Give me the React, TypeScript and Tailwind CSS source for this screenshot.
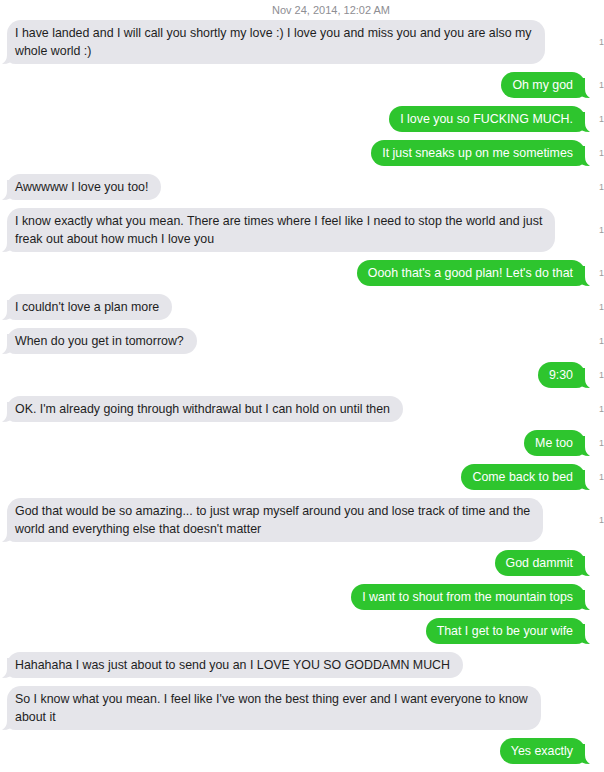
import React from "react";

type Msg = { side: "L" | "R"; lines: string[]; ts?: boolean };

const msgs: Msg[] = [
  { side: "L", lines: ["I have landed and I will call you shortly my love :) I love you and miss you and you are also my", "whole world :)"], ts: true },
  { side: "R", lines: ["Oh my god"], ts: true },
  { side: "R", lines: ["I love you so FUCKING MUCH."], ts: true },
  { side: "R", lines: ["It just sneaks up on me sometimes"], ts: true },
  { side: "L", lines: ["Awwwww I love you too!"], ts: true },
  { side: "L", lines: ["I know exactly what you mean. There are times where I feel like I need to stop the world and just", "freak out about how much I love you"], ts: true },
  { side: "R", lines: ["Oooh that's a good plan! Let's do that"], ts: true },
  { side: "L", lines: ["I couldn't love a plan more"], ts: true },
  { side: "L", lines: ["When do you get in tomorrow?"], ts: true },
  { side: "R", lines: ["9:30"], ts: true },
  { side: "L", lines: ["OK. I'm already going through withdrawal but I can hold on until then"], ts: true },
  { side: "R", lines: ["Me too"], ts: true },
  { side: "R", lines: ["Come back to bed"], ts: true },
  { side: "L", lines: ["God that would be so amazing... to just wrap myself around you and lose track of time and the", "world and everything else that doesn't matter"], ts: true },
  { side: "R", lines: ["God dammit"] },
  { side: "R", lines: ["I want to shout from the mountain tops"] },
  { side: "R", lines: ["That I get to be your wife"] },
  { side: "L", lines: ["Hahahaha I was just about to send you an I LOVE YOU SO GODDAMN MUCH"] },
  { side: "L", lines: ["So I know what you mean. I feel like I've won the best thing ever and I want everyone to know", "about it"] },
  { side: "R", lines: ["Yes exactly"] },
];

function Tail({ side, color }: { side: "L" | "R"; color: string }) {
  const path = "M5 0 H20 V20 H14 Q10 20 8 18.5 Q5 20 0 20 Q5 17 5 11 Z";
  return (
    <svg
      width="20"
      height="20"
      viewBox="0 0 20 20"
      className={
        side === "L"
          ? "absolute bottom-0 left-[-5px]"
          : "absolute bottom-0 right-[-5px] -scale-x-100"
      }
    >
      <path d={path} fill={color} />
    </svg>
  );
}

function Bubble({ m }: { m: Msg }) {
  const isL = m.side === "L";
  const color = isL ? "#e5e5ea" : "#2ec52e";
  return (
    <div className="flex w-[604px] items-center">
      <div
        className={
          isL
            ? "flex w-[599px] justify-start pl-[7px]"
            : "flex w-[599px] justify-end pr-[14px]"
        }
      >
        <div
          className={
            isL
              ? "relative rounded-[14px] bg-[#e5e5ea] py-[4px] pl-[8px] pr-[13px] text-[12.4px] leading-[18px] text-[#1e1e1e]"
              : "relative rounded-[14px] bg-[#2ec52e] py-[4px] pl-[11px] pr-[12px] text-[12.4px] leading-[18px] text-white"
          }
        >
          <Tail side={m.side} color={color} />
          <div className="relative whitespace-nowrap">
            {m.lines.map((l, i) => (
              <div key={i}>{l}</div>
            ))}
          </div>
        </div>
      </div>
      <div className="w-[5px] whitespace-nowrap text-[9px] leading-[12px] text-[#9a9a9a]">
        {m.ts ? "1" : ""}
      </div>
    </div>
  );
}

export default function App() {
  return (
    <div
      className="h-[772px] w-[604px] overflow-hidden bg-white"
      style={{ fontFamily: '"Liberation Sans", Arial, sans-serif' }}
    >
      <div className="flex h-[20px] items-center justify-center pl-[58px] text-[11px] text-[#8e8e93]">
        Nov 24, 2014, 12:02 AM
      </div>
      <div className="flex flex-col gap-[8px]">
        {msgs.map((m, i) => (
          <Bubble key={i} m={m} />
        ))}
      </div>
    </div>
  );
}
